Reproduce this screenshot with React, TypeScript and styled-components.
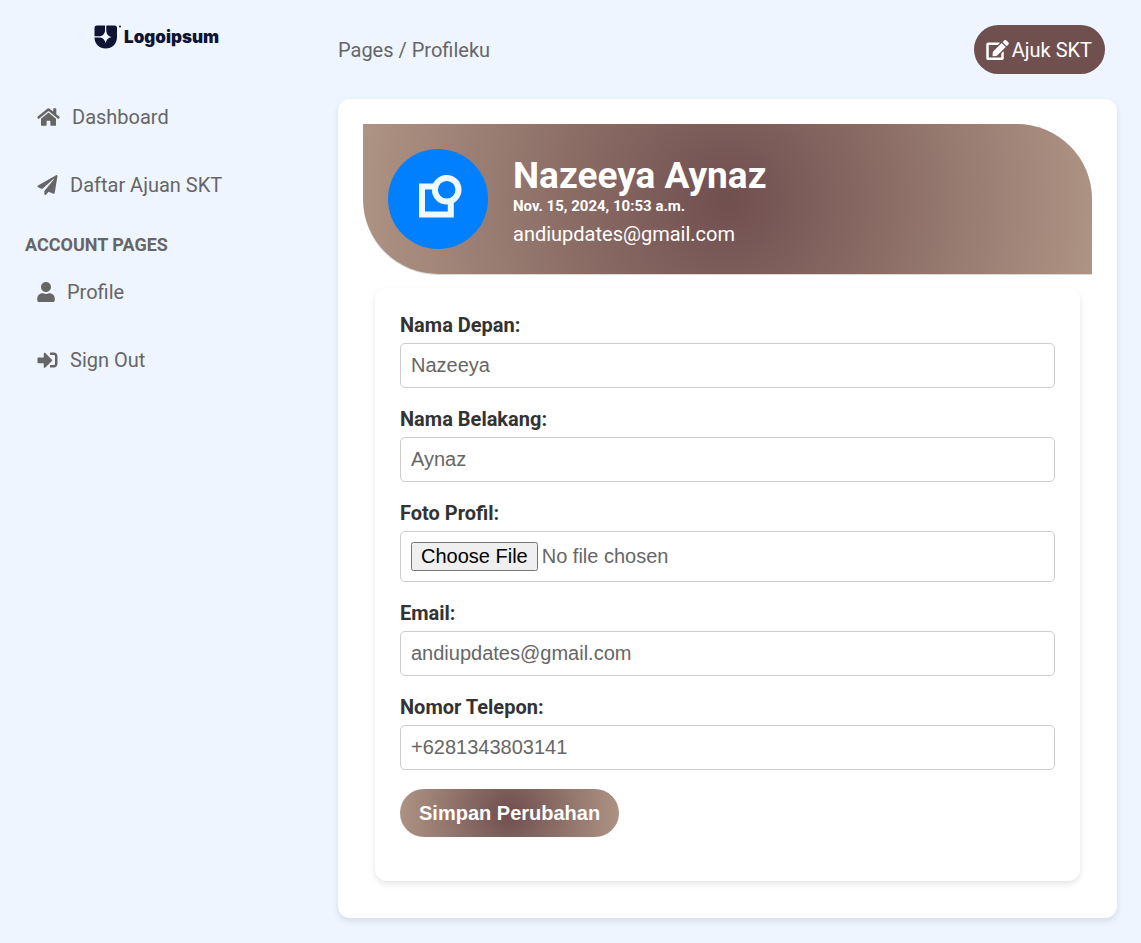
import React from "react";
import styled, { createGlobalStyle } from "styled-components";
import { FaHome, FaPaperPlane, FaUser, FaSignInAlt, FaEdit } from "react-icons/fa";

const GlobalStyle = createGlobalStyle`
  * { box-sizing: border-box; }
  body {
    margin: 0;
    background: #eef5ff;
    color: #666;
    font: 400 20px/24px Roboto, "Liberation Sans", sans-serif;
  }
`;

const brownGradient = "radial-gradient(circle, #704f4f, #ae9484)";

const Page = styled.div`
  display: flex;
  min-height: 100vh;
`;

const Sidebar = styled.aside`
  flex: 0 0 313px;
  padding: 25px;
`;

const Logo = styled.a`
  display: flex;
  align-items: center;
  justify-content: center;
  gap: 2px;
  height: 24px;
  margin-bottom: 44px;
  color: #0f1334;
  font: 900 17px/24px Inter, sans-serif;
  text-decoration: none;
`;

const NavList = styled.ul`
  display: flex;
  flex-direction: column;
  gap: 20px;
  margin: 0;
  padding: 0;
  list-style: none;
`;

const NavLink = styled.a<{ $iconWidth: number }>`
  display: flex;
  align-items: center;
  gap: 12px;
  padding: 12px;
  color: inherit;
  text-decoration: none;

  svg {
    width: ${(p) => p.$iconWidth}px;
    height: 20px;
  }
`;

const NavHeading = styled.h2`
  margin: 24px 0 11px;
  font-size: 18px;
  line-height: 24px;
  font-weight: 700;
  text-transform: uppercase;
`;

const Main = styled.main`
  flex: 1;
  min-width: 0;
  padding: 25px 24px 25px 25px;
`;

const TopBar = styled.header`
  display: flex;
  align-items: center;
  justify-content: space-between;
  padding-right: 12px;
  margin-bottom: 25px;
`;

const SubmitLink = styled.button`
  display: flex;
  align-items: center;
  gap: 3px;
  padding: 12px 13px 12px 12px;
  height: 49px;
  border: 0;
  border-radius: 25px;
  background: #704f4f;
  color: #fff;
  font: inherit;

  svg {
    width: 23px;
    height: 20px;
  }
`;

const Card = styled.section`
  padding: 25px;
  border-radius: 12px;
  background: #fff;
  box-shadow: 0 3px 6px rgba(0, 0, 0, 0.1);
`;

const Banner = styled.div`
  display: flex;
  align-items: center;
  gap: 25px;
  padding: 25px;
  border-radius: 0 75px 0 75px;
  background: ${brownGradient};
  box-shadow: 0 1px 0 rgba(0, 0, 0, 0.15);
  color: #fff;
`;

const Identity = styled.div`
  display: flex;
  flex-direction: column;
  padding-top: 2px;
`;

const UserName = styled.h1`
  margin: 0;
  font-size: 37px;
  line-height: 44px;
  font-weight: 700;
`;

const JoinDate = styled.time`
  margin-bottom: 8px;
  font-size: 15px;
  line-height: 16px;
  font-weight: 700;
`;

const Form = styled.form`
  display: flex;
  flex-direction: column;
  align-items: flex-start;
  gap: 19px;
  margin: 14px 12px 12px;
  padding: 25px 25px 44px;
  border-radius: 12px;
  background: #fff;
  box-shadow: 0 3px 6px rgba(0, 0, 0, 0.1);
`;

const Field = styled.div`
  display: flex;
  flex-direction: column;
  gap: 6px;
  width: 100%;
`;

const Label = styled.label`
  color: #333;
  font-weight: 700;
`;

const Input = styled.input`
  width: 100%;
  padding: 10px;
  border: 1px solid #ccc;
  border-radius: 5px;
  background: #fff;
  color: #666;
  font: 20px "Liberation Sans", Arial, sans-serif;

  &::file-selector-button {
    padding: 1px 8px;
  }
`;

const SaveButton = styled.button`
  height: 48px;
  padding: 12px 19px;
  border: 0;
  border-radius: 25px;
  background: ${brownGradient};
  color: #fff;
  font: 700 20px "Liberation Sans", Arial, sans-serif;
`;

const LogoMark = () => (
  <svg width="28" height="24" viewBox="0 0 28 24" aria-hidden="true">
    <path
      fill="currentColor"
      d="M3 0.5H11V6C10.500 9 9 10.800 6 11.300H0.500V3Q0.500 0.500 3 0.500ZM12.300 0.500H20.500Q23 0.500 23 3V12C23 19 18 23.500 11.700 23.500S0.500 19 0.500 12.500H6C9 13 10.700 14.600 11.600 18C12.500 14.600 14.200 12.800 17.500 12C14.200 11.200 12.700 9.500 12.300 6Z"
    />
    <circle cx="26" cy="1.500" r="1" fill="currentColor" />
  </svg>
);

const Avatar = () => (
  <svg width="100" height="100" viewBox="0 0 100 100" role="img" aria-label="Foto profil">
    <circle cx="50" cy="50" r="50" fill="#007fff" />
    <path d="M34 37.500H62.800V65.500H34Z" fill="none" stroke="#f0f8ff" strokeWidth="6" />
    <circle cx="58.700" cy="40.700" r="11.800" fill="#007fff" stroke="#f0f8ff" strokeWidth="6" />
  </svg>
);

const mainLinks = [
  { label: "Dashboard", Icon: FaHome, iconWidth: 23 },
  { label: "Daftar Ajuan SKT", Icon: FaPaperPlane, iconWidth: 21 },
];

const accountLinks = [
  { label: "Profile", Icon: FaUser, iconWidth: 18 },
  { label: "Sign Out", Icon: FaSignInAlt, iconWidth: 21 },
];

const fields = [
  { id: "first-name", label: "Nama Depan:", type: "text", value: "Nazeeya" },
  { id: "last-name", label: "Nama Belakang:", type: "text", value: "Aynaz" },
  { id: "photo", label: "Foto Profil:", type: "file" },
  { id: "email", label: "Email:", type: "email", value: "andiupdates@gmail.com" },
  { id: "phone", label: "Nomor Telepon:", type: "tel", value: "+6281343803141" },
];

const Nav = ({ links }: { links: typeof mainLinks }) => (
  <NavList>
    {links.map(({ label, Icon, iconWidth }) => (
      <li key={label}>
        <NavLink href="#" $iconWidth={iconWidth}>
          <Icon />
          {label}
        </NavLink>
      </li>
    ))}
  </NavList>
);

export default function App() {
  return (
    <>
      <GlobalStyle />
      <Page>
        <Sidebar>
          <Logo href="#">
            <LogoMark />
            Logoipsum
          </Logo>
          <nav>
            <Nav links={mainLinks} />
            <NavHeading>Account Pages</NavHeading>
            <Nav links={accountLinks} />
          </nav>
        </Sidebar>
        <Main>
          <TopBar>
            <span>Pages / Profileku</span>
            <SubmitLink type="button">
              <FaEdit />
              Ajuk SKT
            </SubmitLink>
          </TopBar>
          <Card>
            <Banner>
              <Avatar />
              <Identity>
                <UserName>Nazeeya Aynaz</UserName>
                <JoinDate>Nov. 15, 2024, 10:53 a.m.</JoinDate>
                <span>andiupdates@gmail.com</span>
              </Identity>
            </Banner>
            <Form onSubmit={(event) => event.preventDefault()}>
              {fields.map(({ id, label, type, value }) => (
                <Field key={id}>
                  <Label htmlFor={id}>{label}</Label>
                  <Input id={id} type={type} defaultValue={value} />
                </Field>
              ))}
              <SaveButton type="submit">Simpan Perubahan</SaveButton>
            </Form>
          </Card>
        </Main>
      </Page>
    </>
  );
}
